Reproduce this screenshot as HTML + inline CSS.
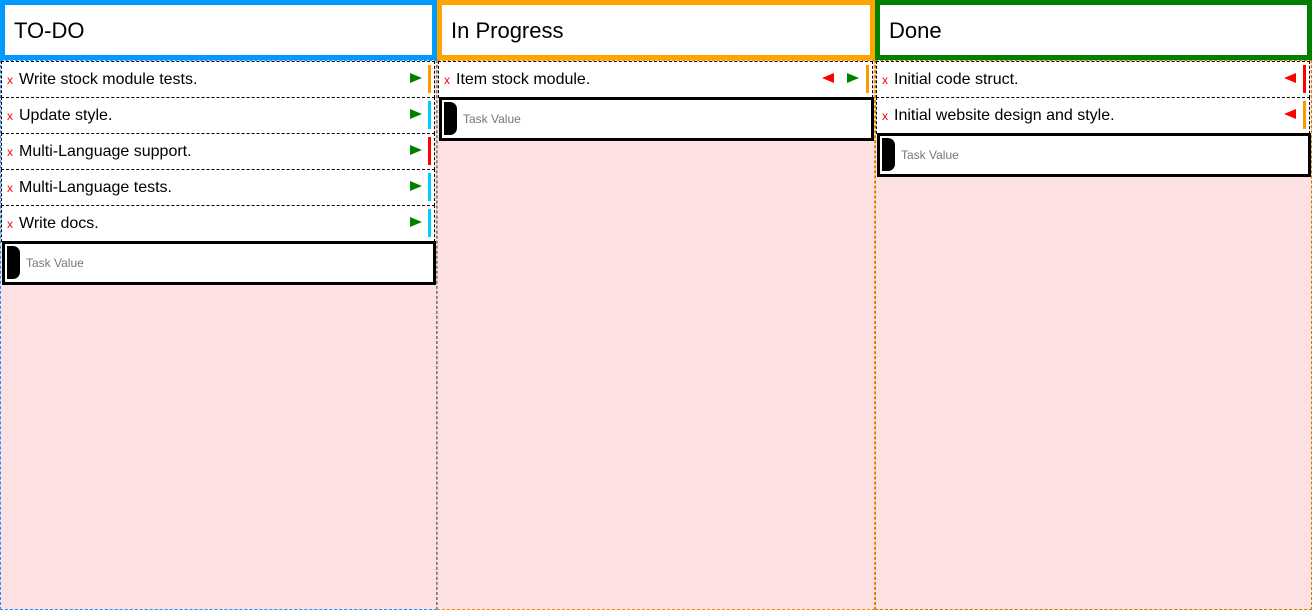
<!DOCTYPE html>
<html><head><style>
*{box-sizing:border-box;margin:0;padding:0}
body{width:1312px;height:610px;overflow:hidden;background:#fff;font-family:"Liberation Sans",Arial,sans-serif;position:relative}
.h{position:absolute;top:0;height:60px;border:5px solid;background:#fff;font-size:22px;padding:13px 0 0 9px;color:#000}
.col{position:absolute;top:60px;height:550px;border:1px dashed;background:#fde0e1}
.it{position:absolute;height:37px;border:1px dashed #000;box-shadow:inset 0 1px 0 rgba(0,0,0,0);background:#fff;font-size:16px}
.it .x{position:absolute;left:5px;top:11px;color:#f00;font-size:12px}
.it .t{position:absolute;left:17px;top:9px;color:#000}
.bar{position:absolute;top:3px;width:3px;height:28px}
.ar{position:absolute;top:11px;width:0;height:0;border-top:5.5px solid transparent;border-bottom:5.5px solid transparent}
.r{border-left:12px solid #008000}
.l{border-right:12px solid #f00}
.in{position:absolute;height:44px;border:3px solid #000;background:#fff}
.in .d{position:absolute;left:2px;top:2px;width:13px;height:33px;background:#000;border-radius:0 7px 7px 0}
.in .p{position:absolute;left:21px;top:12px;font-size:12px;color:#777}
</style></head><body>
<div class="col" style="left:0;width:437px;border-color:#1e90ff"></div>
<div class="col" style="left:437px;width:438px;border-color:#ff8c00"></div>
<div class="col" style="left:875px;width:437px;border-color:#c08000"></div>
<div class="h" style="left:0;width:437px;border-color:#0099ff">TO-DO</div>
<div class="h" style="left:437px;width:438px;border-color:#ffa500">In Progress</div>
<div class="h" style="left:875px;width:437px;border-color:#008000">Done</div>

<div class="it" style="left:1px;top:61px;width:434px"><span class="x">x</span><span class="t">Write stock module tests.</span><span class="ar r" style="left:408px"></span><span class="bar" style="left:426px;background:#ff9900"></span></div>
<div class="it" style="left:1px;top:97px;width:434px"><span class="x">x</span><span class="t">Update style.</span><span class="ar r" style="left:408px"></span><span class="bar" style="left:426px;background:#00ccff"></span></div>
<div class="it" style="left:1px;top:133px;width:434px"><span class="x">x</span><span class="t">Multi-Language support.</span><span class="ar r" style="left:408px"></span><span class="bar" style="left:426px;background:#ff0000"></span></div>
<div class="it" style="left:1px;top:169px;width:434px"><span class="x">x</span><span class="t">Multi-Language tests.</span><span class="ar r" style="left:408px"></span><span class="bar" style="left:426px;background:#00ccff"></span></div>
<div class="it" style="left:1px;top:205px;width:434px"><span class="x">x</span><span class="t">Write docs.</span><span class="ar r" style="left:408px"></span><span class="bar" style="left:426px;background:#00ccff"></span></div>
<div class="in" style="left:2px;top:241px;width:434px"><span class="d"></span><span class="p">Task Value</span></div>

<div class="it" style="left:438px;top:61px;width:435px"><span class="x">x</span><span class="t">Item stock module.</span><span class="ar l" style="left:383px"></span><span class="ar r" style="left:408px"></span><span class="bar" style="left:427px;background:#ff9900"></span></div>
<div class="in" style="left:439px;top:97px;width:435px"><span class="d"></span><span class="p">Task Value</span></div>

<div class="it" style="left:876px;top:61px;width:434px"><span class="x">x</span><span class="t">Initial code struct.</span><span class="ar l" style="left:407px"></span><span class="bar" style="left:426px;background:#ff0000"></span></div>
<div class="it" style="left:876px;top:97px;width:434px"><span class="x">x</span><span class="t">Initial website design and style.</span><span class="ar l" style="left:407px"></span><span class="bar" style="left:426px;background:#ff9900"></span></div>
<div class="in" style="left:877px;top:133px;width:434px"><span class="d"></span><span class="p">Task Value</span></div>
</body></html>
